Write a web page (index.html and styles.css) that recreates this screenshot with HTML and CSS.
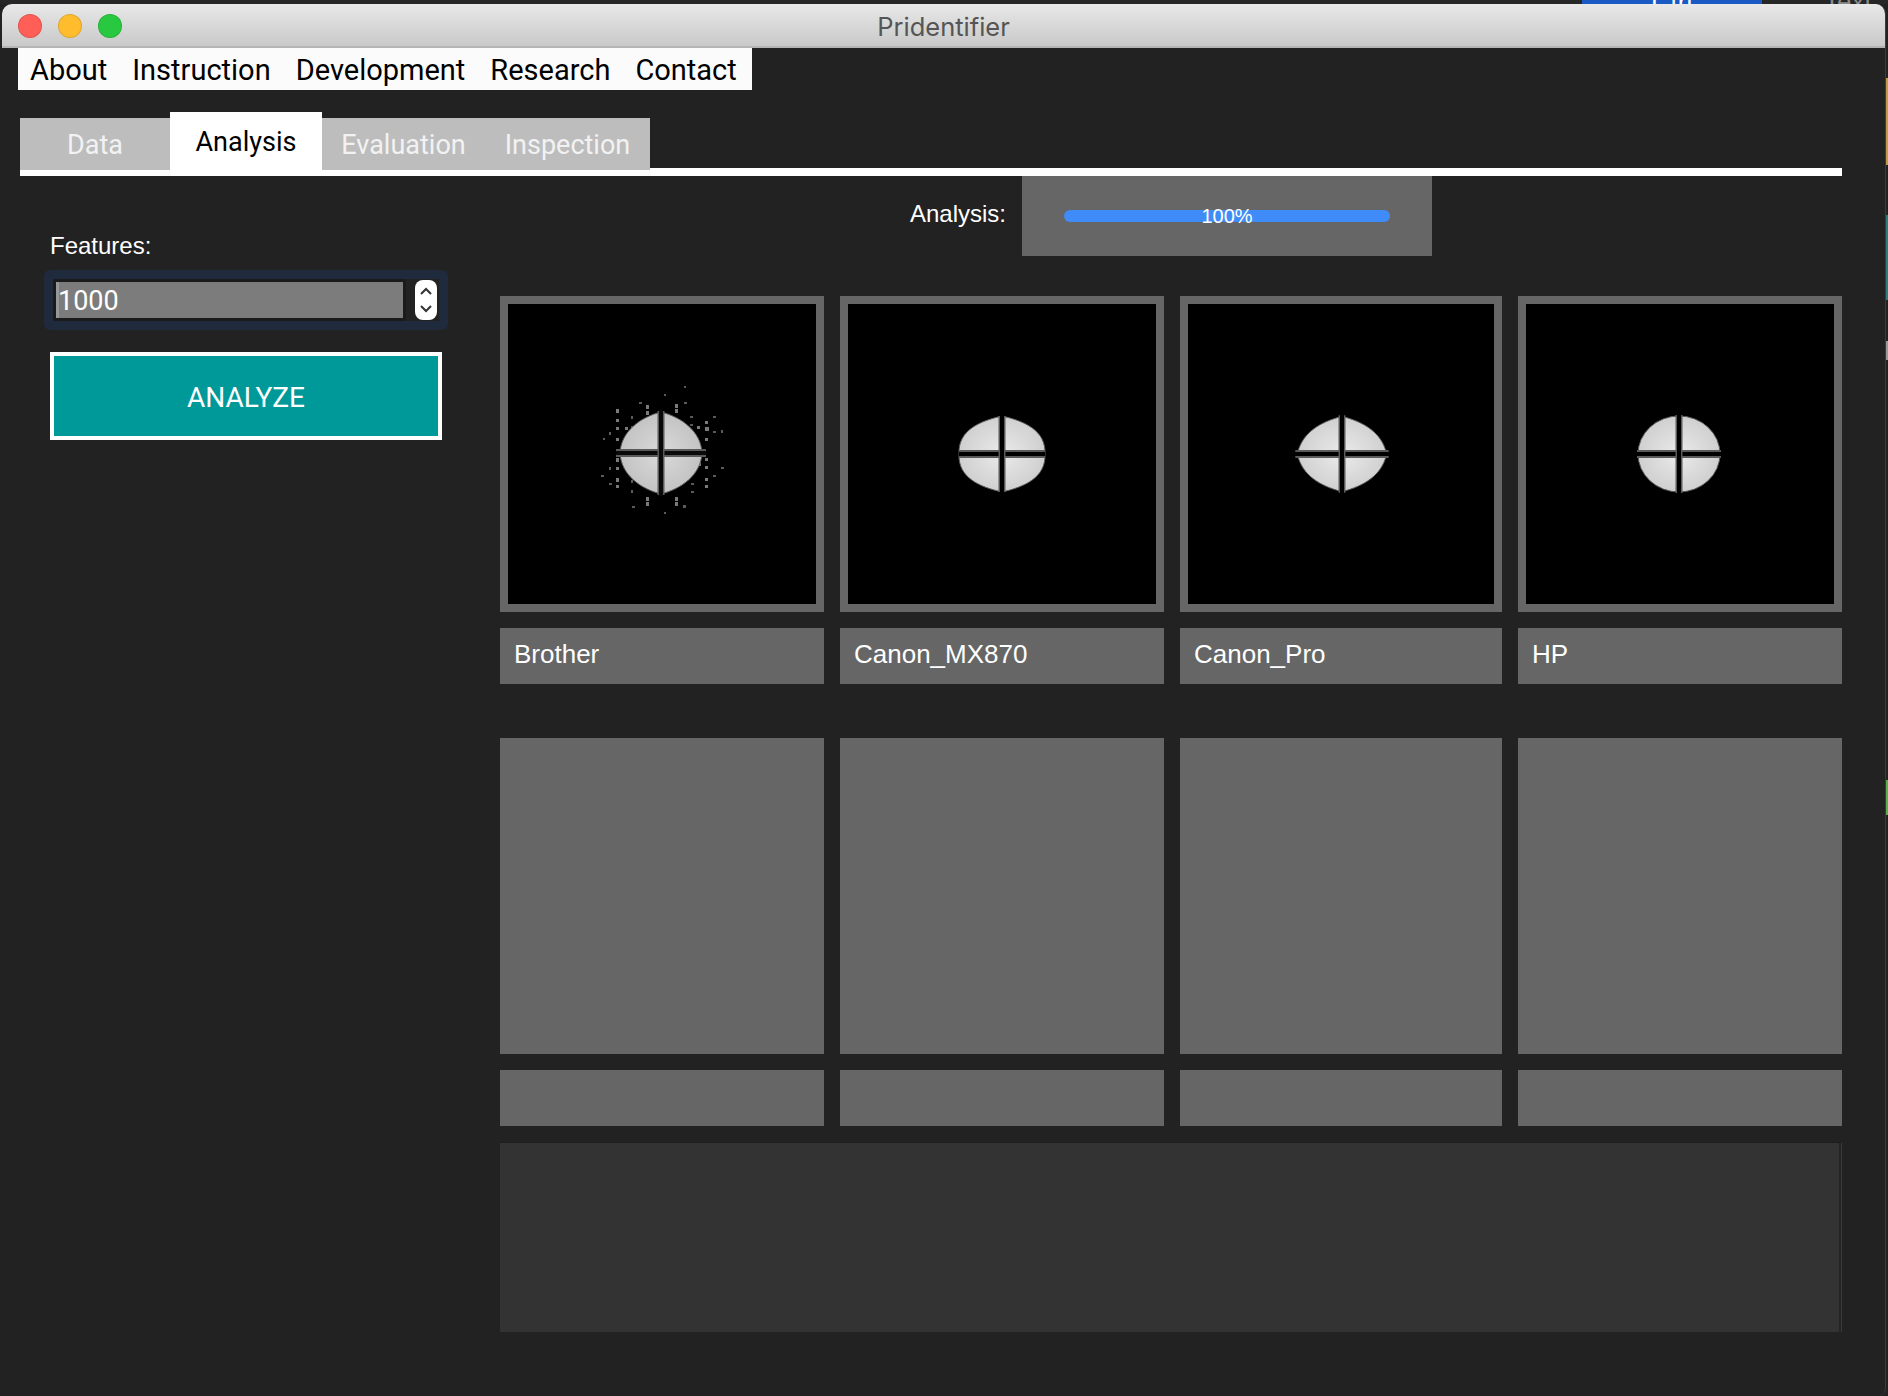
FILE: index.html
```html
<!DOCTYPE html>
<html lang="en">
<head>
    <meta charset="UTF-8">
    <meta name="viewport" content="width=device-width, initial-scale=1.0">
    <title>Pridentifier</title>
    <link rel="stylesheet" href="styles.css">
</head>
<body>
    <div class="top-strip">
        <span class="top-button">Ctrl</span>
        <span class="top-text">Text</span>
    </div>
    <div class="desktop">
        <div class="window">
            <div class="titlebar">
                <div class="lights">
                    <span class="light red"></span>
                    <span class="light yellow"></span>
                    <span class="light green"></span>
                </div>
                <div class="title">Pridentifier</div>
            </div>

            <div class="menu">
                <span>About</span>
                <span>Instruction</span>
                <span>Development</span>
                <span>Research</span>
                <span>Contact</span>
            </div>

            <div class="tabs">
                <div class="tab tab-first">Data</div>
                <div class="tab active">Analysis</div>
                <div class="tab tab-eval">Evaluation</div>
                <div class="tab tab-last">Inspection</div>
            </div>
            <div class="tab-line"></div>

            <div class="content">
                <div class="sidebar">
                    <label class="features-label" for="features">Features:</label>
                    <div class="spinner">
                        <input class="spinner-input" id="features" type="text" value="1000">
                        <div class="spinner-arrows">
                            <svg width="22" height="40" viewBox="0 0 22 40">
                                <path d="M6 14 L11 9 L16 14" fill="none" stroke="#333" stroke-width="2"/>
                                <path d="M6 26 L11 31 L16 26" fill="none" stroke="#333" stroke-width="2"/>
                            </svg>
                        </div>
                    </div>
                    <button class="analyze">ANALYZE</button>
                </div>

                <div class="main">
                    <div class="progress-row">
                        <span class="progress-label">Analysis:</span>
                        <div class="progress-panel">
                            <div class="progress-bar"><span>100%</span></div>
                        </div>
                    </div>

                    <div class="grid">
                        <div class="tile">
                            <svg class="spectrum" viewBox="0 0 308 300">
                                <defs>
                                    <radialGradient id="glow" cx="50%" cy="50%" r="55%">
                                        <stop offset="0" stop-color="#f6f6f6"/>
                                        <stop offset="0.15" stop-color="#e6e6e6"/>
                                        <stop offset="1" stop-color="#cdcdcd"/>
                                    </radialGradient>
                                    <radialGradient id="glow-dim" cx="50%" cy="50%" r="55%">
                                        <stop offset="0" stop-color="#dadada"/>
                                        <stop offset="1" stop-color="#c0c0c0"/>
                                    </radialGradient>
                                </defs>
                                <g transform="translate(153 149)" shape-rendering="crispEdges">
                                    <g fill="#7a7a7a">
                                        <rect x="-45" y="-44" width="3" height="4"/>
                                        <rect x="-45" y="-34" width="3" height="3"/>
                                        <rect x="-45" y="-26" width="3" height="3"/>
                                        <rect x="-45" y="-15" width="3" height="3"/>
                                        <rect x="-45" y="5" width="3" height="4"/>
                                        <rect x="-45" y="14" width="3" height="3"/>
                                        <rect x="-45" y="25" width="3" height="4"/>
                                        <rect x="-45" y="32" width="3" height="3"/>
                                        <rect x="44" y="-32" width="3" height="3"/>
                                        <rect x="44" y="-26" width="4" height="4"/>
                                        <rect x="44" y="-15" width="3" height="3"/>
                                        <rect x="44" y="5" width="3" height="3"/>
                                        <rect x="44" y="13" width="3" height="3"/>
                                        <rect x="44" y="25" width="3" height="3"/>
                                        <rect x="44" y="32" width="3" height="3"/>
                                        <rect x="-15" y="-48" width="3" height="4"/>
                                        <rect x="-15" y="-42" width="3" height="4"/>
                                        <rect x="14" y="-49" width="3" height="4"/>
                                        <rect x="14" y="-44" width="3" height="4"/>
                                        <rect x="-15" y="44" width="3" height="4"/>
                                        <rect x="-15" y="49" width="3" height="4"/>
                                        <rect x="14" y="44" width="3" height="4"/>
                                        <rect x="14" y="49" width="3" height="4"/>
                                        <rect x="-36" y="-26" width="3" height="3"/>
                                        <rect x="-37" y="8" width="3" height="3"/>
                                        <rect x="36" y="-27" width="3" height="3"/>
                                        <rect x="37" y="10" width="3" height="3"/>
                                    </g>
                                    <g fill="#5a5a5a">
                                        <rect x="-58" y="-15" width="2" height="2"/>
                                        <rect x="-52" y="-21" width="2" height="3"/>
                                        <rect x="-60" y="22" width="3" height="2"/>
                                        <rect x="-52" y="14" width="2" height="3"/>
                                        <rect x="-52" y="30" width="3" height="2"/>
                                        <rect x="-30" y="-37" width="2" height="3"/>
                                        <rect x="-30" y="-27" width="2" height="3"/>
                                        <rect x="-30" y="27" width="2" height="3"/>
                                        <rect x="-30" y="37" width="2" height="3"/>
                                        <rect x="29" y="-37" width="3" height="2"/>
                                        <rect x="29" y="-29" width="3" height="2"/>
                                        <rect x="30" y="30" width="3" height="2"/>
                                        <rect x="30" y="38" width="3" height="2"/>
                                        <rect x="52" y="-37" width="3" height="2"/>
                                        <rect x="52" y="-22" width="3" height="2"/>
                                        <rect x="60" y="-23" width="2" height="3"/>
                                        <rect x="60" y="14" width="3" height="2"/>
                                        <rect x="52" y="22" width="3" height="2"/>
                                        <rect x="-22" y="-51" width="3" height="2"/>
                                        <rect x="23" y="-51" width="3" height="2"/>
                                        <rect x="-29" y="53" width="3" height="2"/>
                                        <rect x="22" y="52" width="3" height="3"/>
                                        <rect x="3" y="-59" width="2" height="2"/>
                                        <rect x="3" y="59" width="2" height="2"/>
                                        <rect x="23" y="-67" width="2" height="2"/>
                                    </g>
                                </g>
                                <g transform="translate(153 149)">
                                    <path d="M-41 0 C-40 -22 -20 -36 0 -41 C20 -36 40 -22 41 0 C40 22 20 36 0 41 C-20 36 -40 22 -41 0Z" fill="url(#glow-dim)" stroke="#5e5e5e"/>
                                    <rect x="-45" y="-4" width="90" height="8" fill="#5a5a5a"/>
                                    <rect x="-45" y="-2" width="90" height="4" fill="#0a0a0a"/>
                                    <rect x="-3.5" y="-42" width="7" height="84" fill="#5a5a5a"/>
                                    <rect x="-2" y="-43" width="4" height="86" fill="#0a0a0a"/>
                                </g>
                            </svg>
                        </div>
                        <div class="tile">
                            <svg class="spectrum" viewBox="0 0 308 300">
                                <g transform="translate(154 150)">
                                    <path d="M-43 0 C-44 -24 -22 -33 0 -38 C22 -33 44 -24 43 0 C44 24 22 33 0 38 C-22 33 -44 24 -43 0Z" fill="url(#glow)" stroke="#5e5e5e"/>
                                    <rect x="-43" y="-4" width="86" height="8" fill="#5a5a5a"/>
                                    <rect x="-43" y="-2" width="86" height="4" fill="#000"/>
                                    <rect x="-3.5" y="-38" width="7" height="76" fill="#5a5a5a"/>
                                    <rect x="-2" y="-39" width="4" height="78" fill="#000"/>
                                </g>
                            </svg>
                        </div>
                        <div class="tile">
                            <svg class="spectrum" viewBox="0 0 308 300">
                                <g transform="translate(155 150)">
                                    <path d="M-45 0 C-40 -22 -22 -32 0 -38 C22 -32 40 -22 45 0 C40 22 22 32 0 38 C-22 32 -40 22 -45 0Z" fill="url(#glow)" stroke="#5e5e5e"/>
                                    <rect x="-47" y="-4" width="94" height="8" fill="#5a5a5a"/>
                                    <rect x="-48" y="-2" width="96" height="4" fill="#000"/>
                                    <rect x="-3.5" y="-39" width="7" height="78" fill="#5a5a5a"/>
                                    <rect x="-2" y="-40" width="4" height="80" fill="#000"/>
                                </g>
                            </svg>
                        </div>
                        <div class="tile">
                            <svg class="spectrum" viewBox="0 0 308 300">
                                <g transform="translate(153 150)">
                                    <ellipse rx="41" ry="38" fill="url(#glow)" stroke="#5e5e5e"/>
                                    <rect x="-42" y="-4" width="84" height="8" fill="#5a5a5a"/>
                                    <rect x="-42" y="-2" width="84" height="4" fill="#000"/>
                                    <rect x="-3.5" y="-39" width="7" height="78" fill="#5a5a5a"/>
                                    <rect x="-2" y="-39" width="4" height="78" fill="#000"/>
                                </g>
                            </svg>
                        </div>

                        <div class="caption">Brother</div>
                        <div class="caption">Canon_MX870</div>
                        <div class="caption">Canon_Pro</div>
                        <div class="caption">HP</div>
                    </div>

                    <div class="grid grid-empty">
                        <div class="tile"></div>
                        <div class="tile"></div>
                        <div class="tile"></div>
                        <div class="tile"></div>
                        <div class="caption"></div>
                        <div class="caption"></div>
                        <div class="caption"></div>
                        <div class="caption"></div>
                    </div>

                    <div class="log"></div>
                </div>
            </div>
        </div>
        <div class="edge">
            <span class="edge-bit edge-yellow"></span>
            <span class="edge-bit edge-teal"></span>
            <span class="edge-bit edge-grey"></span>
            <span class="edge-bit edge-green"></span>
        </div>
    </div>
</body>
</html>
```

FILE: styles.css
```css
* {
    box-sizing: border-box;
}
html, body {
    margin: 0;
    padding: 0;
}
body {
    width: 1888px;
    height: 1396px;
    overflow: hidden;
    background-color: #222;
    font-family: "Liberation Sans", Arial, sans-serif;
    color: #fff;
}
.top-strip {
    height: 4px;
    display: flex;
    overflow: hidden;
    background-color: #262626;
}
.top-button {
    width: 180px;
    height: 4px;
    margin-left: 1582px;
    background-color: #1a5ac4;
    text-align: center;
    font-size: 26px;
    line-height: 4px;
    color: #fff;
    overflow: hidden;
}
.top-text {
    margin-left: 62px;
    height: 4px;
    font-size: 26px;
    line-height: 4px;
    color: #8a8a8a;
    overflow: hidden;
}
.desktop {
    display: flex;
    height: 1392px;
    padding-left: 2px;
}
.window {
    width: 1884px;
    height: 1392px;
    background-color: #222;
    border-radius: 10px 10px 8px 8px;
    border-right: 1px solid #3c3c3c;
    overflow: hidden;
}
.edge {
    width: 2px;
    display: flex;
    flex-direction: column;
}
.edge-bit {
    display: block;
    width: 2px;
}
.edge-yellow {
    height: 87px;
    margin-top: 74px;
    background-color: #c39a45;
}
.edge-teal {
    height: 85px;
    margin-top: 50px;
    background-color: #2f7d78;
}
.edge-grey {
    height: 19px;
    margin-top: 41px;
    background-color: #999;
}
.edge-green {
    height: 35px;
    margin-top: 420px;
    background-color: #58b04a;
}

/* title bar */
.titlebar {
    height: 44px;
    padding-top: 2px;
    display: grid;
    grid-template-columns: 1fr auto 1fr;
    align-items: center;
    background: linear-gradient(#e8e8e8, #c9c9c9);
    border-bottom: 2px solid #b4b4b4;
}
.lights {
    display: flex;
    gap: 16px;
    padding-left: 16px;
}
.light {
    width: 24px;
    height: 24px;
    border-radius: 50%;
    border: 1px solid rgba(0, 0, 0, 0.12);
}
.red {
    background-color: #ff5f57;
}
.yellow {
    background-color: #ffbd2e;
}
.green {
    background-color: #28c940;
}
.title {
    color: #555;
    font-family: Inter, "Liberation Sans", sans-serif;
    font-size: 25.5px;
}

/* menu */
.menu {
    display: flex;
    width: 734px;
    height: 42px;
    margin-left: 16px;
    padding-left: 12px;
    padding-top: 2px;
    gap: 25px;
    align-items: center;
    background-color: #fbfbfb;
    color: #000;
    font-family: Roboto, sans-serif;
    font-size: 29px;
}

/* tabs */
.tabs {
    display: flex;
    align-items: flex-end;
    height: 58px;
    margin-top: 22px;
    margin-left: 18px;
    margin-bottom: -2px;
    position: relative;
}
.tab {
    height: 52px;
    display: flex;
    align-items: center;
    justify-content: center;
    padding-top: 2px;
    background-color: #bdbdbd;
    color: #f2f2f2;
    font-family: Roboto, sans-serif;
    font-size: 27px;
}
.tab-first {
    width: 150px;
}
.tab.active {
    width: 152px;
    height: 58px;
    background-color: #fff;
    color: #000;
}
.tab-eval {
    width: 163px;
}
.tab-last {
    width: 165px;
}
.tab-line {
    height: 8px;
    width: 1822px;
    margin-left: 18px;
    background-color: #fff;
}

/* content */
.content {
    display: flex;
    margin-left: 18px;
}
.sidebar {
    width: 480px;
    padding-left: 24px;
    padding-top: 56px;
}
.features-label {
    display: block;
    height: 28px;
    line-height: 28px;
    margin-bottom: 10px;
    margin-left: 6px;
    font-size: 24px;
}
.spinner {
    display: flex;
    align-items: center;
    width: 404px;
    height: 60px;
    padding-right: 2px;
    border: 9px solid #1f2a3d;
    border-radius: 6px;
    background-color: #222;
}
.spinner-input {
    width: 356px;
    height: 42px;
    padding: 2px 0 0 2px;
    border: 3px solid #1b1b1b;
    background-color: #7c7c7c;
    box-shadow: inset 3px 0 0 #979797;
    color: #fff;
    font-family: Roboto, sans-serif;
    font-size: 27px;
    outline: none;
}
.spinner-arrows {
    width: 22px;
    height: 40px;
    margin-left: 9px;
    background-color: #fff;
    border-radius: 8px;
}
.spinner-arrows svg {
    display: block;
}
.analyze {
    display: block;
    width: 392px;
    height: 88px;
    margin-top: 22px;
    margin-left: 6px;
    padding-top: 3px;
    background-color: #009999;
    border: 4px solid #fff;
    color: #fff;
    font-family: Roboto, sans-serif;
    font-size: 28px;
}

/* right side */
.main {
    width: 1342px;
}
.progress-row {
    display: flex;
    justify-content: center;
    gap: 16px;
    height: 80px;
    margin-bottom: 40px;
}
.progress-label {
    height: 76px;
    line-height: 76px;
    font-size: 24px;
}
.progress-panel {
    width: 410px;
    height: 80px;
    padding: 0 42px;
    display: flex;
    align-items: center;
    background-color: #666;
}
.progress-bar {
    width: 100%;
    height: 12px;
    display: flex;
    align-items: center;
    justify-content: center;
    border-radius: 6px;
    background-color: #3f8cf8;
    font-size: 20px;
    line-height: 12px;
}
.grid {
    display: grid;
    grid-template-columns: 324px 324px 322px 324px;
    column-gap: 16px;
    row-gap: 16px;
}
.grid-empty {
    margin-top: 54px;
}
.tile {
    height: 316px;
    padding: 8px;
    background-color: #666;
}
.spectrum {
    display: block;
    width: 100%;
    height: 100%;
    background-color: #000;
}
.caption {
    height: 56px;
    line-height: 52px;
    padding-left: 14px;
    background-color: #666;
    font-size: 26px;
}
.log {
    height: 190px;
    margin-top: 16px;
    background-color: #333;
    border-top: 1px solid #1d1d1d;
    border-right: 1px solid #3a3a3a;
    box-shadow: inset -2px 0 0 #242424;
}
```
